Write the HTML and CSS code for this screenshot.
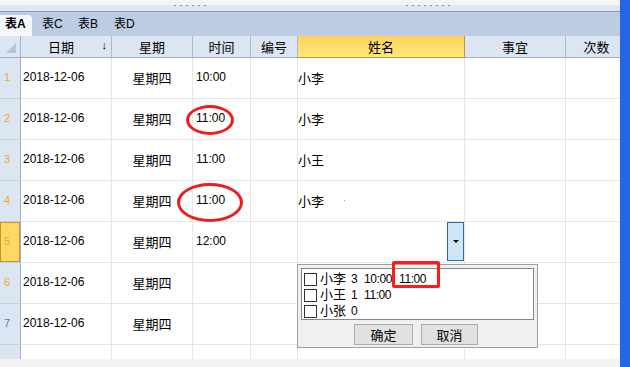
FILE: index.html
```html
<!DOCTYPE html>
<html lang="zh-CN">
<head>
<meta charset="UTF-8" />
<title>表A</title>
<link rel="stylesheet" href="styles.css">
</head>
<body>
<div class="app">
  <div class="main">
    <div class="titlebar">
      <span class="ghost g1"></span>
      <span class="ghost g2"></span>
    </div>

    <div class="tabs">
      <span class="tab active">表A</span>
      <span class="tab">表C</span>
      <span class="tab">表B</span>
      <span class="tab">表D</span>
    </div>

    <div class="sheet">
      <div class="row head">
        <div class="cell corner"><span class="tri"></span></div>
        <div class="cell sortable">日期<span class="sort">↓</span></div>
        <div class="cell">星期</div>
        <div class="cell">时间</div>
        <div class="cell">编号</div>
        <div class="cell hot">姓名</div>
        <div class="cell">事宜</div>
        <div class="cell last">次数</div>
      </div>

      <div class="row">
        <div class="cell num">1</div>
        <div class="cell date">2018-12-06</div>
        <div class="cell day">星期四</div>
        <div class="cell time">10:00</div>
        <div class="cell"></div>
        <div class="cell name">小李</div>
        <div class="cell"></div>
        <div class="cell"></div>
      </div>
      <div class="row">
        <div class="cell num">2</div>
        <div class="cell date">2018-12-06</div>
        <div class="cell day">星期四</div>
        <div class="cell time">11:00</div>
        <div class="cell"></div>
        <div class="cell name">小李</div>
        <div class="cell"></div>
        <div class="cell"></div>
      </div>
      <div class="row">
        <div class="cell num">3</div>
        <div class="cell date">2018-12-06</div>
        <div class="cell day">星期四</div>
        <div class="cell time">11:00</div>
        <div class="cell"></div>
        <div class="cell name">小王</div>
        <div class="cell"></div>
        <div class="cell"></div>
      </div>
      <div class="row">
        <div class="cell num">4</div>
        <div class="cell date">2018-12-06</div>
        <div class="cell day">星期四</div>
        <div class="cell time">11:00</div>
        <div class="cell"></div>
        <div class="cell name">小李<span class="speck"></span></div>
        <div class="cell"></div>
        <div class="cell"></div>
      </div>
      <div class="row">
        <div class="cell num sel">5</div>
        <div class="cell date">2018-12-06</div>
        <div class="cell day">星期四</div>
        <div class="cell time">12:00</div>
        <div class="cell"></div>
        <div class="cell name"><span class="dd"><span class="caret"></span></span></div>
        <div class="cell"></div>
        <div class="cell"></div>
      </div>
      <div class="row">
        <div class="cell num">6</div>
        <div class="cell date">2018-12-06</div>
        <div class="cell day">星期四</div>
        <div class="cell time"></div>
        <div class="cell"></div>
        <div class="cell name"></div>
        <div class="cell"></div>
        <div class="cell"></div>
      </div>
      <div class="row">
        <div class="cell num blue">7</div>
        <div class="cell date">2018-12-06</div>
        <div class="cell day">星期四</div>
        <div class="cell time"></div>
        <div class="cell"></div>
        <div class="cell name"></div>
        <div class="cell"></div>
        <div class="cell"></div>
      </div>
      <div class="row">
        <div class="cell num"></div>
        <div class="cell date"></div>
        <div class="cell day"></div>
        <div class="cell time"></div>
        <div class="cell"></div>
        <div class="cell name"></div>
        <div class="cell"></div>
        <div class="cell"></div>
      </div>
    </div>

    <div class="status"></div>
  </div>
  <div class="vbar"></div>

  <!-- marks drawn over the sheet -->
  <span class="ring r1"></span>
  <span class="ring r2"></span>

  <div class="popup">
    <div class="list">
      <label class="item"><span class="box"></span><span class="who">小李</span><span class="n">3</span><span class="t">10:00</span><span class="t">11:00</span></label>
      <label class="item"><span class="box"></span><span class="who">小王</span><span class="n">1</span><span class="t">11:00</span></label>
      <label class="item"><span class="box"></span><span class="who">小张</span><span class="n">0</span></label>
    </div>
    <div class="actions">
      <button class="btn">确定</button>
      <button class="btn">取消</button>
    </div>
  </div>

  <span class="mark"></span>
</div>
</body>
</html>
```

FILE: styles.css
```css
* {
  box-sizing: border-box;
}
body {
  margin: 0;
  font-family: "Liberation Sans", "Noto Sans CJK SC", sans-serif;
  font-size: 12px;
  color: #000;
  background: #fff;
  overflow: hidden;
}
.app {
  position: relative;
  display: flex;
  width: 630px;
  height: 367px;
}
.main {
  width: 620px;
  display: flex;
  flex-direction: column;
  overflow: hidden;
}
.vbar {
  width: 10px;
  background: #2466e7;
}

/* top strip */
.titlebar {
  flex: none;
  height: 12px;
  display: flex;
  background: linear-gradient(#f5f5f5 0 5px, #dde8f5 5px);
  border-bottom: 1px solid #8c99ab;
}
.ghost {
  height: 1px;
  margin-top: 5px;
  background: repeating-linear-gradient(90deg, #8a8a8a 0 2px, transparent 2px 6px);
}
.g1 { margin-left: 174px; width: 32px; }
.g2 { margin-left: 200px; width: 46px; }

/* sheet tabs */
.tabs {
  flex: none;
  height: 24px;
  display: flex;
  align-items: flex-end;
  background: #bccde3;
}
.tab {
  width: 36px;
  height: 21px;
  line-height: 19px;
  padding-left: 10px;
  font-size: 12px;
}
.tab.active {
  width: 32px;
  padding-left: 5px;
  font-weight: bold;
  background: #f3f7fc;
  border-top-right-radius: 4px;
}

/* grid */
.sheet {
  flex: 1;
  overflow: hidden;
}
.row {
  display: grid;
  grid-template-columns: 21px 91px 81px 58px 47px 167px 101px 55px;
  height: 41px;
}
.cell {
  display: flex;
  align-items: center;
  border-right: 1px solid #e6e6e6;
  border-bottom: 1px solid #e6e6e6;
  white-space: nowrap;
  overflow: hidden;
  padding-bottom: 2px;
}
.head {
  height: 22px;
}
.head .cell {
  justify-content: center;
  padding-bottom: 0;
  font-size: 13px;
  background: #dce6f2;
  border-right-color: #a8bbd1;
  border-bottom-color: #9fb2c8;
}
.head .corner {
  justify-content: flex-end;
  align-items: flex-end;
  padding: 0 4px 4px 0;
  border-right-color: #9cb2cb;
}
.tri {
  width: 10px;
  height: 10px;
  background: #b6c3d4;
  clip-path: polygon(100% 0, 100% 100%, 0 100%);
}
.head .sortable {
  position: relative;
  padding-right: 10px;
}
.sort {
  position: absolute;
  right: 4px;
  top: 3px;
  font-size: 11px;
}
.head .hot {
  background: linear-gradient(#fdd15c, #fee97c);
  border-right-color: #c8922e;
  border-bottom-color: #c8922e;
}
.head .last {
  padding-left: 7px;
}

.num {
  padding-left: 4px;
  font-size: 11px;
  color: #f2a52a;
  background: #dce6f2;
  border-right-color: #9cb2cb;
  border-bottom-color: #c3d2e3;
}
.num.sel {
  background: #ffd966;
  box-shadow: inset 0 0 0 1px #c9922f;
}
.num.blue {
  color: #4a7fb5;
}
.date {
  padding-left: 2px;
}
.day {
  justify-content: center;
  font-size: 13px;
}
.time {
  padding-left: 3px;
}
.name {
  padding-left: 0;
  font-size: 13px;
}
.speck {
  width: 1px;
  height: 1px;
  margin-left: 20px;
  background: #999;
}

/* combo button in 姓名 cell */
.dd {
  align-self: flex-start;
  margin-left: auto;
  width: 17px;
  height: 39px;
  display: flex;
  align-items: center;
  justify-content: center;
  background: #cde5f8;
  border: 1px solid #2f6a9a;
}
.caret {
  border-left: 3px solid transparent;
  border-right: 3px solid transparent;
  border-top: 3px solid #000;
}

.status {
  flex: none;
  height: 8px;
  background: #f3f3f3;
}

/* red marks */
.ring {
  position: absolute;
  border: 3px solid #ee1d1d;
  border-radius: 50%;
}
.r1 { left: 186px; top: 105px; width: 48px; height: 30px; }
.r2 { left: 177px; top: 183px; width: 66px; height: 39px; }

.mark {
  position: absolute;
  left: 392px;
  top: 261px;
  width: 48px;
  height: 27px;
  border: 3px solid #ff1b1b;
  border-radius: 2px;
}

/* dropdown popup */
.popup {
  position: absolute;
  left: 297px;
  top: 264px;
  width: 241px;
  height: 84px;
  padding: 3px;
  background: #f0f0f0;
  border: 1px solid #a0a0a0;
}
.list {
  height: 52px;
  padding: 2px 0 0 2px;
  background: #fff;
  border: 1px solid #828790;
}
.item {
  display: flex;
  align-items: baseline;
  height: 16px;
  line-height: 16px;
  font-size: 13px;
  white-space: nowrap;
}
.box {
  align-self: center;
  width: 13px;
  height: 13px;
  margin-right: 3px;
  border: 1px solid #333;
  background: #fff;
}
.who {
  width: 26px;
}
.n {
  margin-left: 5px;
  width: 7px;
  font-size: 12px;
}
.t {
  margin-left: 6px;
  width: 29px;
  font-size: 12px;
  letter-spacing: -0.4px;
}
.actions {
  display: flex;
  gap: 8px;
  margin-top: 4px;
  padding-left: 53px;
}
.btn {
  width: 59px;
  height: 21px;
  padding: 0;
  font: inherit;
  font-size: 13px;
  background: #e1e1e1;
  border: 1px solid #adadad;
}
.btn + .btn {
  width: 57px;
}
```
